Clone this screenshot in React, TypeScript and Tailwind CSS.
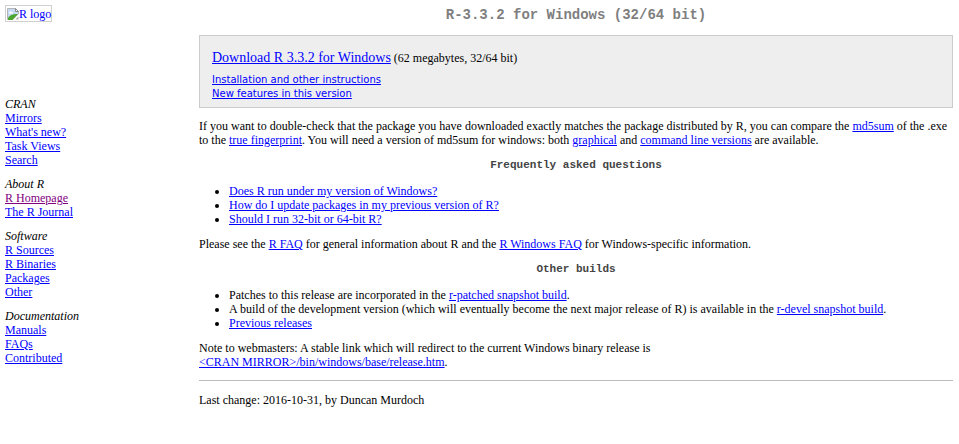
import type { ReactNode } from "react";

type NavLink = { label: string; visited?: boolean };

const sections: { title: string; links: NavLink[] }[] = [
  {
    title: "CRAN",
    links: [{ label: "Mirrors" }, { label: "What's new?" }, { label: "Task Views" }, { label: "Search" }],
  },
  { title: "About R", links: [{ label: "R Homepage", visited: true }, { label: "The R Journal" }] },
  {
    title: "Software",
    links: [{ label: "R Sources" }, { label: "R Binaries" }, { label: "Packages" }, { label: "Other" }],
  },
  { title: "Documentation", links: [{ label: "Manuals" }, { label: "FAQs" }, { label: "Contributed" }] },
];

function Link({ children, visited = false }: { children: ReactNode; visited?: boolean }) {
  return (
    <a href="#" className={visited ? "text-[#800080] underline" : "text-[#0000ff] underline"}>
      {children}
    </a>
  );
}

function SubHeading({ children }: { children: ReactNode }) {
  return (
    <h2 className="text-center font-['Liberation_Mono',monospace] text-[11px] leading-[15px] font-bold text-[#444444]">
      {children}
    </h2>
  );
}

function BrokenImage() {
  return (
    <svg viewBox="0 0 12 12" className="size-3 shrink-0" aria-hidden="true">
      <path d="M0.5 0.5H8.5L11.5 3.5V6L6 11.5H0.5Z" fill="#c3d9f5" stroke="#b4b4b4" />
      <path d="M8.5 0.5V3.5H11.5Z" fill="#ffffff" stroke="#8a8a8a" />
      <path d="M2 5C2 3.5 3.5 3.1 4.2 3.9C5.4 3.5 6.4 4.5 5.8 5.5H2.4Z" fill="#ffffff" />
      <path d="M1 12V10C3 7 6 5.6 11 6L5.5 12Z" fill="#4ba52f" />
      <path d="M6 12L12 6V8L8 12Z" fill="#ffffff" />
      <path d="M8.5 11.5H11.5V8.5Z" fill="#a8a8a8" />
    </svg>
  );
}

function Sidebar() {
  return (
    <nav className="flex flex-col gap-2.5 px-[5px] pt-[5px]">
      <div className="h-[82px]">
        <a
          href="#"
          className="inline-flex h-[17px] items-center border border-[#d0d0d0] pl-px text-[#0000ff]"
        >
          <BrokenImage />
          R logo
        </a>
      </div>
      {sections.map((section) => (
        <section key={section.title}>
          <h2 className="italic">{section.title}</h2>
          <ul>
            {section.links.map((link) => (
              <li key={link.label}>
                <Link visited={link.visited}>{link.label}</Link>
              </li>
            ))}
          </ul>
        </section>
      ))}
    </nav>
  );
}

export default function App() {
  return (
    <div className="grid grid-cols-[199px_1fr] bg-white font-['Liberation_Serif',serif] text-[12px] leading-[14px] text-black">
      <Sidebar />
      <main className="flex flex-col gap-[11px] pt-[7px] pr-1.5 pb-4">
        <h1 className="text-center font-['Liberation_Mono',monospace] text-[14px] leading-[17px] font-bold text-[#7f7f7f]">
          R-3.3.2 for Windows (32/64 bit)
        </h1>

        <div className="border border-[#cccccc] bg-[#eeeeee] px-3 pt-3 pb-1.5">
          <p className="leading-5">
            <a href="#" className="text-[14px] text-[#0000ff] underline">
              Download R 3.3.2 for Windows
            </a>{" "}
            (62 megabytes, 32/64 bit)
          </p>
          <ul className="mt-[5px] font-['DejaVu_Sans',sans-serif] text-[10px]">
            <li>
              <Link>Installation and other instructions</Link>
            </li>
            <li>
              <Link>New features in this version</Link>
            </li>
          </ul>
        </div>

        <p>
          If you want to double-check that the package you have downloaded exactly matches the package
          distributed by R, you can compare the <Link>md5sum</Link> of the .exe to the{" "}
          <Link>true fingerprint</Link>. You will need a version of md5sum for windows: both{" "}
          <Link>graphical</Link> and <Link>command line versions</Link> are available.
        </p>

        <SubHeading>Frequently asked questions</SubHeading>
        <ul className="list-disc pl-[30px]">
          <li>
            <Link>Does R run under my version of Windows?</Link>
          </li>
          <li>
            <Link>How do I update packages in my previous version of R?</Link>
          </li>
          <li>
            <Link>Should I run 32-bit or 64-bit R?</Link>
          </li>
        </ul>
        <p>
          Please see the <Link>R FAQ</Link> for general information about R and the{" "}
          <Link>R Windows FAQ</Link> for Windows-specific information.
        </p>

        <SubHeading>Other builds</SubHeading>
        <ul className="list-disc pl-[30px]">
          <li>
            Patches to this release are incorporated in the <Link>r-patched snapshot build</Link>.
          </li>
          <li>
            A build of the development version (which will eventually become the next major release of R)
            is available in the <Link>r-devel snapshot build</Link>.
          </li>
          <li>
            <Link>Previous releases</Link>
          </li>
        </ul>
        <p>
          Note to webmasters: A stable link which will redirect to the current Windows binary release is
          <br />
          <Link>&lt;CRAN MIRROR&gt;/bin/windows/base/release.htm</Link>.
        </p>

        <footer className="border-t border-[#bbbbbb] pt-3">
          Last change: 2016-10-31, by Duncan Murdoch
        </footer>
      </main>
    </div>
  );
}
